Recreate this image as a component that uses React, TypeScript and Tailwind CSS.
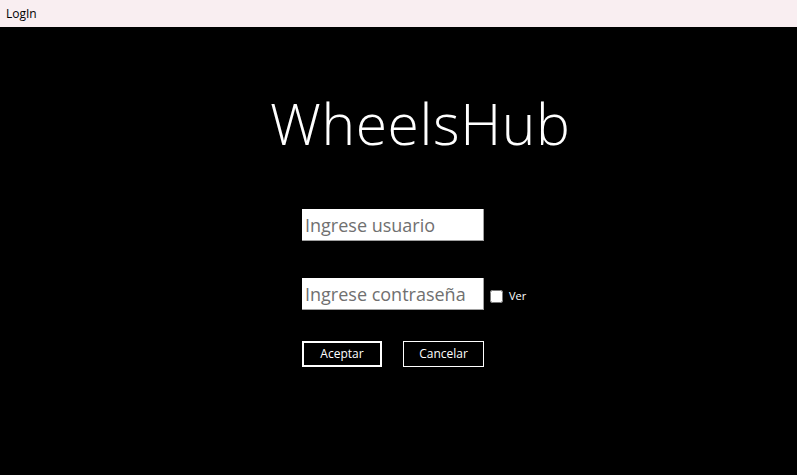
import { useState } from "react";

export default function App() {
    const [ver, setVer] = useState(false);

    return (
        <div className="w-[797px] h-[475px] bg-black flex flex-col font-['Open_Sans',sans-serif] overflow-hidden">
            {/* TITLE BAR */}
            <div className="h-[27px] bg-[#f9eef1] flex items-center px-[6px] text-[12px] text-black">
                LogIn
            </div>

            {/* CONTENT */}
            <div className="flex flex-col pl-[302px]">
                <h1 className="ml-[-32px] mt-[64px] text-[57px] leading-[64px] font-light text-white tracking-[0.6px]">
                    WheelsHub
                </h1>

                <input
                    type="text"
                    placeholder="Ingrese usuario"
                    className="mt-[54px] w-[182px] h-[32px] bg-white px-[3px] text-[18px] text-black placeholder:text-[#707070] border-b border-r border-[#a0a0a0] outline-none"
                />

                <div className="mt-[37px] flex items-center">
                    <input
                        type={ver ? "text" : "password"}
                        placeholder="Ingrese contraseña"
                        className="w-[182px] h-[32px] bg-white px-[3px] text-[18px] text-black placeholder:text-[#707070] border-b border-r border-[#a0a0a0] outline-none"
                    />
                    <label className="flex items-center gap-[6px] ml-[6px] mt-[4px] text-white text-[11px]">
                        <input
                            type="checkbox"
                            checked={ver}
                            onChange={() => setVer(!ver)}
                            className="w-[13px] h-[13px] m-0 accent-white"
                        />
                        Ver
                    </label>
                </div>

                <div className="mt-[31px] flex gap-[21px]">
                    <button className="w-[80px] h-[26px] border-2 border-white text-white text-[12px]">
                        Aceptar
                    </button>
                    <button className="w-[81px] h-[26px] border border-white text-white text-[12px]">
                        Cancelar
                    </button>
                </div>
            </div>
        </div>
    );
}
